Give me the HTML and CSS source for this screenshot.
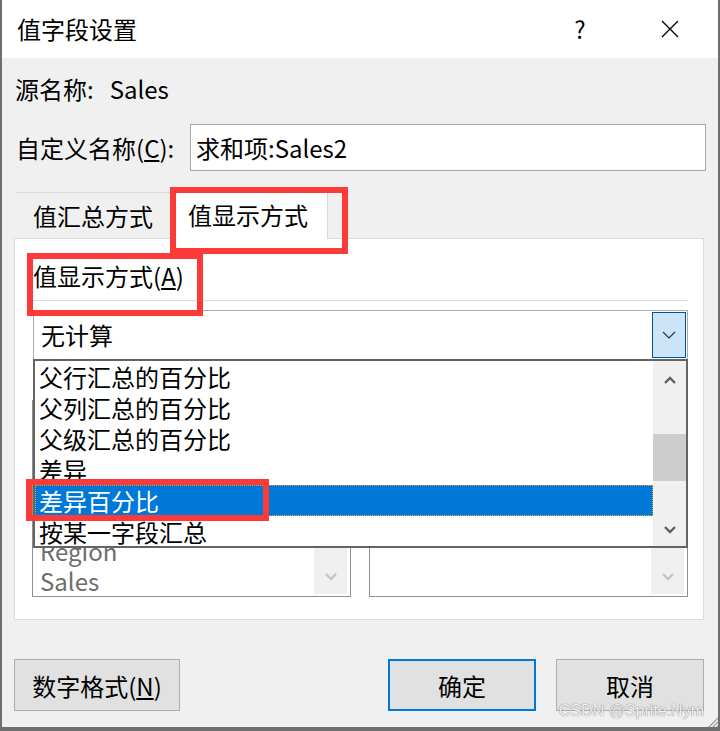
FILE: index.html
```html
<!DOCTYPE html>
<html lang="zh-CN">
<head>
    <meta charset="UTF-8">
    <meta name="viewport" content="width=device-width, initial-scale=1.0">
    <title>值字段设置</title>
    <link rel="stylesheet" href="styles.css">
</head>
<body>

    <div class="window">
        <div class="titlebar">
            <div class="title">值字段设置</div>
            <div class="tb-btn help">?</div>
            <div class="tb-btn close">
                <svg width="18" height="18" viewBox="0 0 18 18"><path d="M1 1 L17 17 M17 1 L1 17" stroke="#000" stroke-width="1.3" fill="none"/></svg>
            </div>
        </div>

        <div class="dialog-body">
            <div class="src-row">源名称:<span class="src-name">Sales</span></div>

            <div class="name-row">
                <label class="name-label">自定义名称(<u>C</u>):</label>
                <div class="name-input">求和项:Sales2</div>
            </div>

            <div class="tabs">
                <div class="tab">值汇总方式</div>
                <div class="tab active">值显示方式</div>
            </div>

            <div class="panel">
                <div class="group-label">值显示方式(<u>A</u>)</div>

                <div class="combo">
                    <div class="combo-text">无计算</div>
                    <div class="combo-btn">
                        <svg width="14" height="8" viewBox="0 0 14 8"><polyline points="1,1 7,7 13,1" stroke="#333" stroke-width="1.2" fill="none"/></svg>
                    </div>

                    <!-- open list, drawn over the field lists -->
                    <div class="dropdown">
                        <div class="dd-items">
                            <div class="dd-item">父行汇总的百分比</div>
                            <div class="dd-item">父列汇总的百分比</div>
                            <div class="dd-item">父级汇总的百分比</div>
                            <div class="dd-item">差异</div>
                            <div class="dd-item selected">差异百分比</div>
                            <div class="dd-item">按某一字段汇总</div>
                        </div>
                        <div class="scrollbar">
                            <div class="sb-btn">
                                <svg width="12" height="8" viewBox="0 0 12 8"><polyline points="1,7 6,2 11,7" stroke="#606060" stroke-width="2.4" fill="none"/></svg>
                            </div>
                            <div class="sb-track"><div class="sb-thumb"></div></div>
                            <div class="sb-btn down">
                                <svg width="12" height="8" viewBox="0 0 12 8"><polyline points="1,1 6,6 11,1" stroke="#606060" stroke-width="2.4" fill="none"/></svg>
                            </div>
                        </div>
                    </div>
                </div>

                <div class="fields">
                    <div class="field">
                        <div class="field-label"></div>
                        <div class="listbox">
                            <div class="lb-items">
                                <div class="lb-item">Region</div>
                                <div class="lb-item">Sales</div>
                            </div>
                            <div class="lb-scroll">
                                <div class="lb-arrow">
                                    <svg width="12" height="8" viewBox="0 0 12 8"><polyline points="1,1 6,6 11,1" stroke="#c4c4c4" stroke-width="2.4" fill="none"/></svg>
                                </div>
                            </div>
                        </div>
                    </div>
                    <div class="field">
                        <div class="field-label"></div>
                        <div class="listbox">
                            <div class="lb-items"></div>
                            <div class="lb-scroll">
                                <div class="lb-arrow">
                                    <svg width="12" height="8" viewBox="0 0 12 8"><polyline points="1,1 6,6 11,1" stroke="#c4c4c4" stroke-width="2.4" fill="none"/></svg>
                                </div>
                            </div>
                        </div>
                    </div>
                </div>
            </div>

            <div class="buttons">
                <button class="btn btn-format">数字格式(<u>N</u>)</button>
                <div class="spacer"></div>
                <button class="btn btn-ok">确定</button>
                <button class="btn btn-cancel">取消</button>
            </div>
        </div>

        <!-- red annotation boxes -->
        <div class="mark mark-tab"></div>
        <div class="mark mark-label"></div>
        <div class="mark mark-item"></div>

        <div class="watermark">CSDN @Sprite.Nym</div>
        <div class="grip">
            <svg width="16" height="18" viewBox="0 0 16 18">
                <path d="M16 2 L0 18 M16 6 L4 18 M16 10 L8 18 M16 14 L12 18" stroke="#9a9a9a" stroke-width="1.2" fill="none"/>
            </svg>
        </div>
    </div>

</body>
</html>
```

FILE: styles.css
```css
body {
    margin: 0;
    padding: 0;
    font-family: "Noto Sans CJK SC", "Noto Sans", sans-serif;
}

.window {
    position: relative;
    width: 720px;
    height: 731px;
    box-sizing: border-box;
    border-left: 2px solid #6e6e6e;
    border-right: 2px solid #6e6e6e;
    border-bottom: 4px solid #6e6e6e;
    background-color: #f0f0f0;
    color: #000;
    font-size: 24px;
    line-height: 30px;
    overflow: hidden;
}

/* title bar */
.titlebar {
    display: flex;
    align-items: center;
    height: 58px;
    background-color: #ffffff;
}

.title {
    padding-left: 15px;
    flex: 1;
}

.tb-btn {
    width: 90px;
    height: 58px;
    display: flex;
    align-items: center;
    justify-content: center;
}

.close {
    margin-right: 3px;
}

/* body */
.dialog-body {
    padding: 0 14px 0 12px;
}

.src-row {
    display: flex;
    align-items: center;
    height: 62px;
    padding-left: 1px;
}

.src-name {
    margin-left: 16px;
}

.name-row {
    display: flex;
    align-items: center;
    margin-top: 4px;
    height: 47px;
}

.name-label {
    width: 176px;
    padding-left: 2px;
    box-sizing: border-box;
}

.name-input {
    width: 516px;
    height: 47px;
    box-sizing: border-box;
    margin-right: -2px;
    border: 1px solid #a8a8a8;
    background-color: #ffffff;
    padding-left: 5px;
    display: flex;
    align-items: center;
}

/* tabs */
.tabs {
    display: flex;
    align-items: flex-start;
    margin-top: 18px;
    height: 49px;
}

.tab {
    width: 156px;
    box-sizing: border-box;
    display: flex;
    align-items: center;
}

.tabs .tab:first-child {
    margin-left: 2px;
    margin-top: 3px;
    height: 46px;
    border-top: 1px solid #d9d9d9;
    padding-left: 17px;
}

.tab.active {
    position: relative;
    z-index: 1;
    height: 50px;
    background-color: #ffffff;
    border: 1px solid #d9d9d9;
    border-bottom: none;
    padding-left: 15px;
}

/* panel */
.panel {
    background-color: #ffffff;
    border: 1px solid #dadada;
    padding: 0 15px 22px 18px;
}

.group-label {
    padding: 22px 0 9px;
    border-bottom: 1px solid #dcdcdc;
}

.combo {
    position: relative;
    margin-top: 9px;
    height: 50px;
    box-sizing: border-box;
    border: 1px solid #acacac;
    padding: 1px;
    display: flex;
}

.combo-text {
    flex: 1;
    padding-left: 6px;
    display: flex;
    align-items: center;
}

.combo-btn {
    width: 34px;
    box-sizing: border-box;
    border: 1px solid #005499;
    background-color: #cce4f7;
    display: flex;
    align-items: center;
    justify-content: center;
}

.dropdown {
    position: absolute;
    z-index: 2;
    left: -1px;
    top: 48px;
    width: 655px;
    height: 189px;
    box-sizing: border-box;
    border: 2px solid #646464;
    background-color: #ffffff;
    display: flex;
}

.dd-items {
    flex: 1;
    overflow: hidden;
}

.dd-item {
    height: 31px;
    line-height: 31px;
    padding-left: 4px;
    white-space: nowrap;
}

.dd-item.selected {
    background-color: #0078d7;
    color: #ffffff;
    outline: 1px dotted #e8a040;
    outline-offset: -1px;
}

.scrollbar {
    width: 33px;
    background-color: #f0f0f0;
    display: flex;
    flex-direction: column;
}

.sb-btn {
    height: 38px;
    display: flex;
    align-items: center;
    justify-content: center;
}

.sb-btn.down {
    padding-top: 6px;
    box-sizing: border-box;
}

.sb-track {
    flex: 1;
    padding-top: 35px;
}

.sb-thumb {
    height: 47px;
    background-color: #cdcdcd;
}

/* base field / item lists */
.fields {
    display: flex;
    gap: 18px;
    margin-left: -1px;
}

.field {
    width: 319px;
}

.field-label {
    height: 40px;
}

.listbox {
    height: 197px;
    box-sizing: border-box;
    border: 1px solid #8f8f8f;
    display: flex;
}

.lb-items {
    flex: 1;
    display: flex;
    flex-direction: column;
    justify-content: flex-end;
    padding-left: 7px;
    color: #6d6d6d;
}

.lb-scroll {
    width: 33px;
    margin: 2px 3px 2px 0;
    background-color: #f0f0f0;
    display: flex;
    flex-direction: column;
    justify-content: flex-end;
}

.lb-arrow {
    height: 34px;
    display: flex;
    align-items: center;
    justify-content: center;
}

/* buttons */
.buttons {
    display: flex;
    gap: 20px;
    margin-top: 39px;
}

.btn {
    height: 52px;
    padding: 0;
    font-family: inherit;
    font-size: 24px;
    color: #000;
    background-color: #e1e1e1;
    border: 1px solid #adadad;
}

.btn-format {
    width: 166px;
}

.spacer {
    flex: 1;
}

.btn-ok {
    width: 148px;
    border: 2px solid #0078d7;
}

.btn-cancel {
    width: 148px;
}

/* annotations */
.mark {
    position: absolute;
    z-index: 5;
    box-sizing: border-box;
    border: 6px solid #fc3a3a;
}

.mark-tab {
    left: 168px;
    top: 187px;
    width: 178px;
    height: 67px;
}

.mark-label {
    left: 25px;
    top: 253px;
    width: 176px;
    height: 63px;
}

.mark-item {
    left: 24px;
    top: 479px;
    width: 243px;
    height: 42px;
}

.watermark {
    position: absolute;
    z-index: 6;
    right: 14px;
    top: 701px;
    font-family: "Liberation Sans", Arial, sans-serif;
    font-size: 16px;
    line-height: 20px;
    color: #f2f2f2;
    text-shadow: 0 0 1px #888, 0 0 1px #888;
}

.grip {
    position: absolute;
    right: 0;
    top: 709px;
    width: 16px;
    height: 18px;
}
```
